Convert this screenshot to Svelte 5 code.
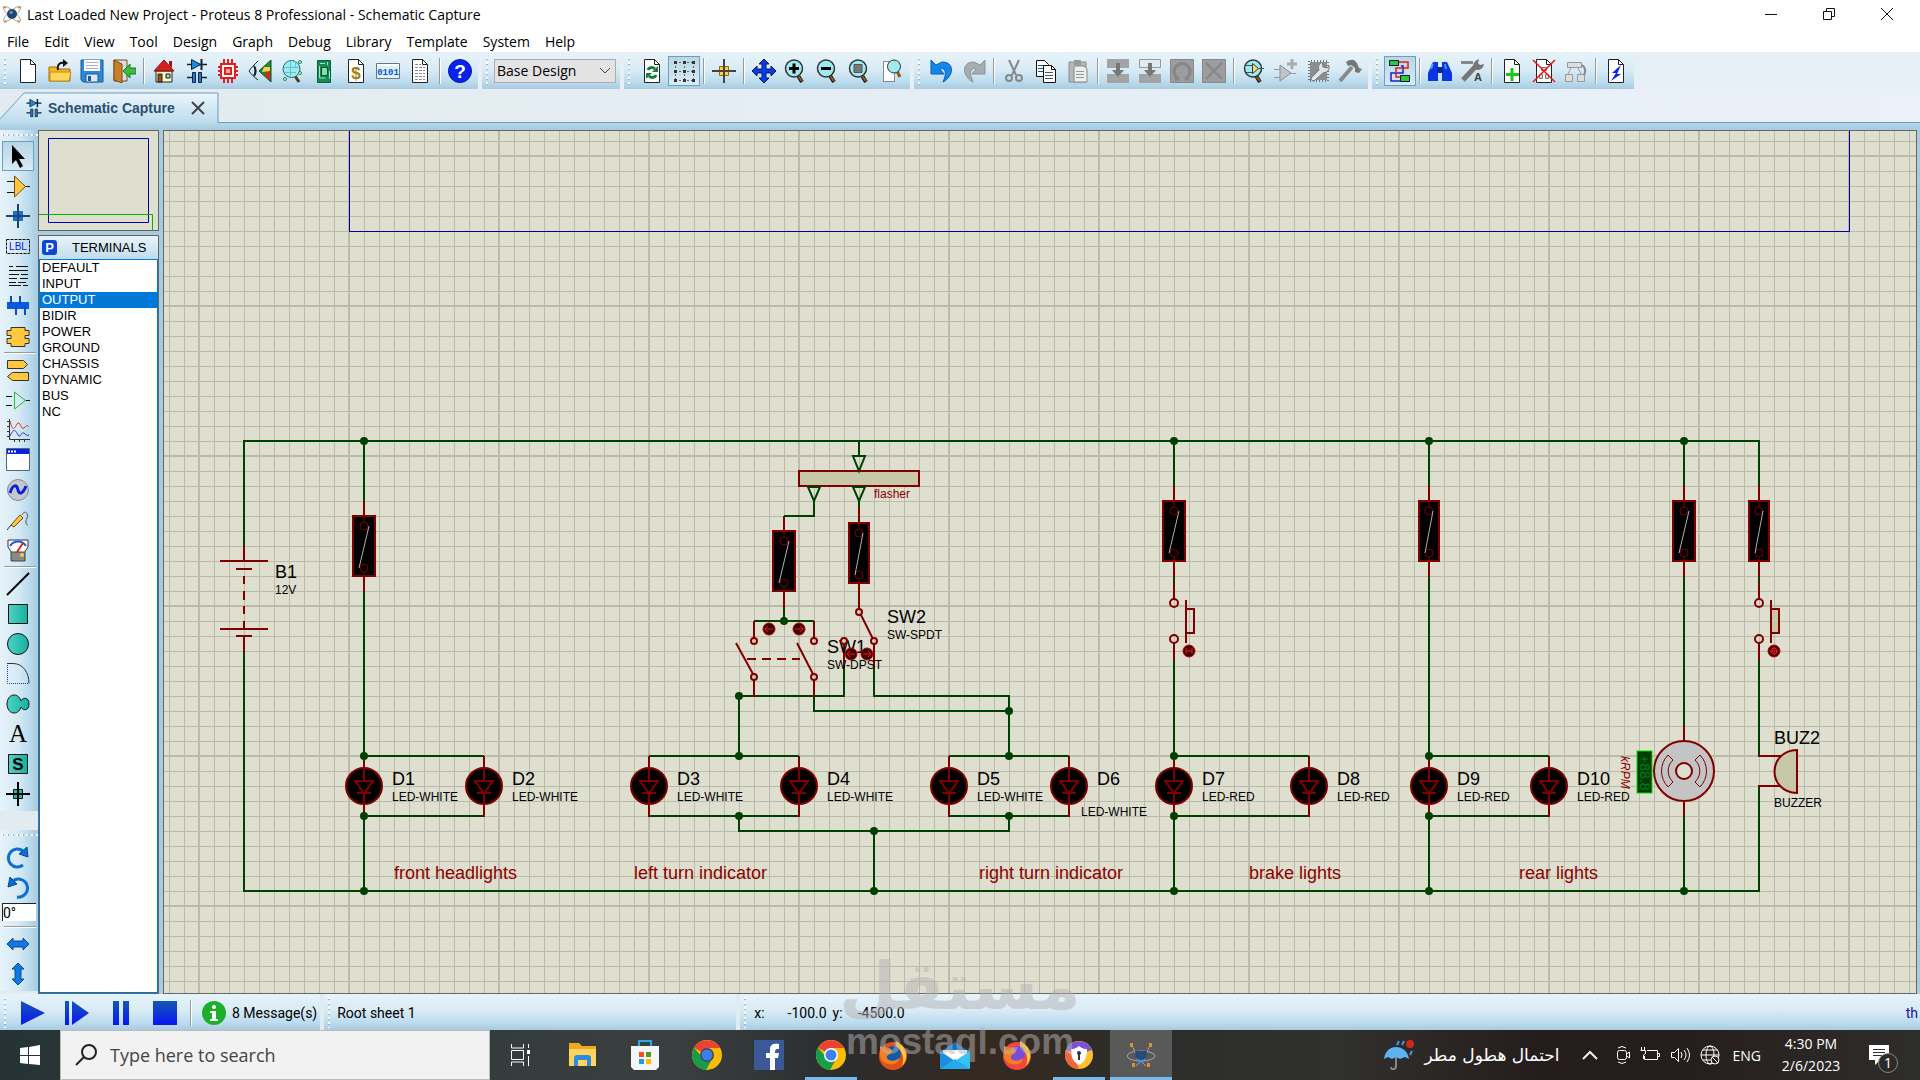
<script lang="ts">
	type Point = [number, number];

	let angle = $state('0°');
	let selected = $state('OUTPUT');
	let query = $state('');

	const menus = ['File', 'Edit', 'View', 'Tool', 'Design', 'Graph', 'Debug', 'Library', 'Template', 'System', 'Help'];
	const terminals = ['DEFAULT', 'INPUT', 'OUTPUT', 'BIDIR', 'POWER', 'GROUND', 'CHASSIS', 'DYNAMIC', 'BUS', 'NC'];

	// '|' is a separator
	const fileBar = ['new', 'open', 'save', 'exit', '|', 'home', 'schematic', 'pcb', 'view3d', 'gerber', 'explorer', 'bom', 'code', 'notes', '|', 'help'];
	const viewBar = ['redraw', 'grid', '|', 'origin', '|', 'pan', 'zoomin', 'zoomout', 'zoomall', 'zoomarea'];
	const editBar = ['undo', 'redo', '|', 'cut', 'copy', 'paste', '|', 'blockcopy', 'blockmove', 'blockrotate', 'blockdelete', '|', 'pick', 'make', 'package', 'decompose'];
	const designBar = ['autoroute', '|', 'find', 'assign', '|', 'addsheet', 'delsheet', 'exitsheet', '|', 'erc'];
	const modeBar = [
		'select', 'component', 'junction', 'label', 'script', 'bus', 'subcircuit', '|',
		'terminal', 'pin', 'graph', 'popup', 'generator', 'probe', 'meter', '|',
		'line', 'box', 'circle', 'arc', 'path', 'text', 'symbol', 'marker'
	];
	const pressed = ['grid', 'autoroute', 'select'];

	const page = '<path d="M4.500 .5h10l5 5v18h-15z" fill="#fff" stroke="#222"/><path d="M14.500 .5v5h5" fill="none" stroke="#222"/>';
	const handle = '<path d="m13 15 5 8" stroke="#222" stroke-width="4"/><path d="m14 17 4 5" stroke="#9a5a1c" stroke-width="2"/>';
	const lens = handle + '<circle cx="10" cy="9.500" r="8.500" fill="#9fe9ef" stroke="#333" stroke-width="1.500"/>';
	const diodeCap =
		'<path d="M3 5.500h20M3 18.500h5M18 18.500h5" stroke="#123" stroke-width="1.500"/><path d="M7.500 .5v10l9-5z" fill="#1a8ae0" stroke="#123"/><path d="M17.500 0v11" stroke="#123" stroke-width="2"/><path d="M8.500 13.500h3v10h-3zM14.500 13.500h3v10h-3z" fill="#1a7fe0" stroke="#123"/>';
	const chrome =
		'<circle cx="15" cy="15" r="15" fill="#fbbc05"/><path d="M15 15 2 7.500A15 15 0 0 1 28 8H15z" fill="#ea4335"/><path d="M2 7.500A15 15 0 0 0 14 30l5-9-4-6-6 1z" fill="#169c4b"/><circle cx="15" cy="15" r="7" fill="#fff"/><circle cx="15" cy="15" r="5.500" fill="#3d7fee"/>';

	const icons: Record<string, string> = {
		new: page,
		open: '<path d="M1 8h7l2 2h12v12H1z" fill="#f4b71f" stroke="#9c6b0c"/><path d="M2 13h21l-2 9H2z" fill="#ffd659" stroke="#c48b15"/><path d="M10 11c-1-6 2-8 7-7" fill="none" stroke="#111" stroke-width="2"/><path d="m15 0 5 4-5 4z" fill="#111"/>',
		save: '<path d="M1 1h22v22H3l-2-2z" fill="#2d86d9" stroke="#1a5a9e"/><path d="M4 1h16v11H4z" fill="#fff"/><path d="M6 3.500h12M6 6.500h12M6 9.500h12" stroke="#aac"/><path d="M6 15h12v8H6z" fill="#dfe8ef" stroke="#1a5a9e"/><path d="M8 17h3v5H8z" fill="#1a5a9e"/>',
		exit: '<path d="M2 1h13v21H2z" fill="#d8dde0" stroke="#7a4a10"/><path d="m2 1 8 4v19l-8-3z" fill="#c98028" stroke="#7a4a10"/><path d="M24 9h-6V5l-7 7 7 7v-4h6z" fill="#3dbb3d" stroke="#1d7a25"/>',
		home: '<path d="M4 12h16v11H4z" fill="#fff5b8" stroke="#222"/><path d="M2 12 12 1l10 11z" fill="#d62020" stroke="#801010"/><path d="M17 2h3v7l-3-3z" fill="#b01010"/><path d="M6 15h4v8H6z" fill="#8a5a22" stroke="#222"/><path d="M14 15h4v4h-4z" fill="#8fd0f5" stroke="#222"/>',
		schematic: diodeCap,
		pcb: '<path d="M8 0v24M12 0v24M16 0v24M2 8h20M2 12h20M2 16h20" stroke="#e02020" stroke-width="2"/><path d="M5 5h14v14H5z" fill="#fff" stroke="#e02020" stroke-width="2"/><path d="M8 8h8v8H8z" fill="#e02020"/><path d="M10 10h4v4h-4z" fill="#f5a0a0"/>',
		view3d: '<path d="M10 2C6 6 3 9 1 12c2 3 5 6 9 9" fill="none" stroke="#222"/><path d="M6 7c2 3 2 7 0 10" fill="#58b" stroke="#123" stroke-width="2"/><path d="M23 1v22L11 12z" fill="#1d8a3a" stroke="#0b4d1c"/><path d="M22 12v9l-6-6z" fill="#e02020"/><path d="M16 8h6v4l-8 1z" fill="#ffd23c"/>',
		gerber: '<path d="m15 17 4 6" stroke="#5a3a14" stroke-width="3"/><circle cx="11.500" cy="10" r="8.500" fill="#9fe9ef" stroke="#2a6a78"/><path d="M4 8.500h15M10.500 2v16M15.500 2v6M4 13.500h12" stroke="#5cc4cc"/><g fill="#cfe" stroke="#168a4a"><circle cx="20" cy="3" r="1.500"/><circle cx="20" cy="14" r="1.500"/><circle cx="5" cy="20" r="1.500"/></g>',
		explorer: '<path d="M5.500 1.500h13v22h-13z" fill="#168a55" stroke="#0d5c38"/><path d="M9.500 8.500h6v8h-6z" fill="#7fe0b0" stroke="#0a4a2c"/><path d="M8 4.500h5M15.500 3v3M7.500 7v12h6M17.500 12v8" stroke="#8ff0c0" fill="none"/>',
		bom: page + '<text x="12" y="20" text-anchor="middle" font-family="Liberation Sans" font-weight="700" font-size="17" fill="#a07f0e">$</text>',
		code: '<path d="M.5 4.500h23v15H.5z" fill="#d8f6fa" stroke="#678"/><path d="M1 5h22v2H1z" fill="#fff"/><text x="12" y="16" text-anchor="middle" font-family="Liberation Mono" font-weight="700" font-size="9" fill="#1550d0">0101</text>',
		notes: page + '<path d="M7 5.500h6M7 8.500h10M7 11.500h10M7 14.500h10M7 17.500h10M7 20.500h10" stroke="#889" stroke-dasharray="3 1"/>',
		help: '<circle cx="12" cy="12" r="11.500" fill="#0a22f0" stroke="#0618a0"/><text x="12" y="19" text-anchor="middle" font-family="Liberation Sans" font-weight="700" font-size="19" fill="#fff">?</text>',
		redraw: page + '<path d="M8 11c1-3 5-3 7-1" fill="none" stroke="#15803a" stroke-width="3"/><path d="M18 7v6h-6z" fill="#15803a"/><path d="M16 16c-1 3-5 3-7 1" fill="none" stroke="#15803a" stroke-width="3"/><path d="M6 20v-6h6z" fill="#15803a"/>',
		grid: '<path d="M3 3.500h19M3 12.500h19M3 21.500h19M3.500 3v18M12.500 3v18M21.500 3v18" fill="none" stroke="#666" stroke-dasharray="2 2"/><path d="M2 3.500h3M11 3.500h3M20 3.500h3M2 12.500h3M11 12.500h3M20 12.500h3M2 21.500h3M11 21.500h3M20 21.500h3" stroke="#333" stroke-width="3"/>',
		origin: '<path d="M7.500 7.500h9v9h-9z" fill="#ffd23c" stroke="#8a6a10"/><path d="M12 0v24M0 12h24" stroke="#444" stroke-width="2"/>',
		pan: '<path d="m12 0 5 5h-3v5h5V7l5 5-5 5v-3h-5v5h3l-5 5-5-5h3v-5H5v3l-5-5 5-5v3h5V5H7z" fill="#0a3af0" stroke="#0a1a50"/>',
		zoomin: lens + '<path d="M5 9.500h10M10 4.500v10" stroke="#000" stroke-width="3"/>',
		zoomout: lens + '<path d="M5 9.500h10" stroke="#000" stroke-width="3"/>',
		zoomall: lens + '<path d="M6 5.500h8v8H6z" fill="#777" stroke="#555"/>',
		zoomarea: '<path d="M3.500 2.500h11v20h-11z" fill="#fff" stroke="#222" stroke-dasharray="1 1"/><path d="m17 12 3 6" stroke="#8a5a22" stroke-width="3"/><circle cx="14" cy="7.500" r="6.500" fill="#9fe9ef" stroke="#333"/>',
		undo: '<path d="M1 1v14h13l-4-5c4-2 8 2 3 13C24 17 25 3 12 3L6 6z" fill="#1486e8" stroke="#0a5ab8"/>',
		redo: '<path d="M23 1v14H10l4-5c-4-2-8 2-3 13C0 17-1 3 12 3l6 3z" fill="#a5adb2" stroke="#8a9298"/>',
		cut: '<path d="m7 1 7 15M17 1l-7 15" stroke="#888" stroke-width="2"/><g fill="none" stroke="#888" stroke-width="2"><circle cx="7" cy="19" r="3"/><circle cx="17" cy="19" r="3"/></g>',
		copy: '<path d="M2.500 1.500h8l4 4v12h-12z" fill="#fff" stroke="#111"/><path d="M4 6.500h6M4 9.500h6M4 12.500h6" stroke="#258"/><path d="M9.500 6.500h8l4 4v13h-12z" fill="#fff" stroke="#111"/><path d="M17.500 6.500v4h4" stroke="#111"/><path d="M11 13.500h8M11 16.500h8M11 19.500h8" stroke="#456"/>',
		paste: '<path d="M3 3h17v20H3z" fill="#b4b8ba" stroke="#8a8e90"/><path d="M8 1h7v5H8z" fill="#999"/><path d="M8 7h10l3 3v13H8z" fill="#eee" stroke="#888"/><path d="M10 12.500h8M10 15.500h8M10 18.500h8" stroke="#999"/>',
		blockcopy: '<path d="M1 0h22v9H1zM1 15h22v9H1z" fill="#a2a5a6"/><path d="M10 4h4v7h4l-6 7-6-7h4z" fill="#777"/>',
		blockmove: '<path d="M1.500 .5h21v8h-21z" fill="#e2eaee" stroke="#999"/><path d="M1 15h22v9H1z" fill="#a2a5a6"/><path d="M10 4h4v7h4l-6 7-6-7h4z" fill="#777"/>',
		blockrotate: '<path d="M.5 .5h23v23H.5z" fill="#9b9d9e" stroke="#888"/><path d="M5 20h4a8 8 0 1 1 6 0h4" fill="none" stroke="#858788" stroke-width="3"/>',
		blockdelete: '<path d="M.5 .5h23v23H.5z" fill="#9b9d9e" stroke="#888"/><path d="m4 4 16 16M20 4 4 20" stroke="#858788" stroke-width="2"/>',
		pick: handle + '<circle cx="11" cy="9.500" r="8.500" fill="#9fe9ef" stroke="#333" stroke-width="1.500"/><path d="M4 6.500h6M4 13.500h6M16 9.500h6" stroke="#357"/><path d="m10.500 4.500 6 5-6 5z" fill="#ffe04a" stroke="#335"/>',
		make: '<path d="M0 10.500h6M0 18.500h6M14 14.500h8" stroke="#999"/><path d="m6 6 11 8-11 8z" fill="#bfc5c8" stroke="#8a8f92"/><path d="M18 0v10M13 5h10" stroke="#aaa" stroke-width="3"/>',
		package: '<path d="M4 3h17v18H4z" fill="#8b8d8e"/><path d="M3 2v20h19V2z" fill="none" stroke="#777" stroke-width="2" stroke-dasharray="1 2"/><path d="M5 19 13 11q-2-5 3-8l1 5 4 1 2-2q1 6-6 7L8 22q-3 0-3-3z" fill="#e2e5e7" stroke="#777"/>',
		decompose: '<path d="m2 22 12-14" stroke="#8a8a8a" stroke-width="4"/><path d="M8 3q4-3 8-2l3 3 2 5 3 1-3 4-4-1v-4l-4-3-3 1z" fill="#777"/>',
		autoroute: '<path d="M13 7h2v7H3v8h9" fill="none" stroke="#1020e0" stroke-width="1.500"/><path d="M10 3h10v6H8v9h4" fill="none" stroke="#e02010" stroke-width="1.500"/><path d="M1.500 1.500h9v5h-9zM12.500 16.500h9v6h-9z" fill="#25d030" stroke="#114"/>',
		find: '<path d="M5 3h5v19H0v-8zM14 3h5l5 11v8H14z" fill="#0a35e0"/><path d="M9 8h6v6H9z" fill="#062a9c"/><path d="M3 10 5 5M18 10l-1-5" stroke="#3d9af5" stroke-width="2"/>',
		assign: '<path d="m3 21 13-14" stroke="#777" stroke-width="5"/><path d="M13 8q0-6 6-8l-1 4 2 2 4-1q-1 6-7 6z" fill="#777"/><path d="M1 3.500h12" stroke="#888" stroke-width="3"/><text x="18" y="22" text-anchor="middle" font-family="Liberation Sans" font-weight="700" font-size="11" fill="#444">A</text>',
		addsheet: page + '<path d="M12 9v13M6 15.500h13" stroke="#1cc61c" stroke-width="3"/>',
		delsheet: page + '<path d="M9.500 8.500h5v3h-5zM7.500 15.500h3v4h-3zM13.500 15.500h3v4h-3z" fill="#ddd" stroke="#777"/><path d="m1 1 22 22M23 1 1 23" stroke="#f01010" stroke-width="1.500"/>',
		exitsheet: '<path d="M3.500 3.500h14v5h-14zM1.500 15.500h7v7h-7zM13.500 15.500h7v7h-7zM7 9l-3 6M14 9l3 6" fill="#ddd" stroke="#999"/><path d="M18 6c4 3 4 6 2 10" fill="none" stroke="#888" stroke-width="2"/>',
		erc: page + '<path d="m17 6-9 8h4l-5 8 10-7h-4z" fill="#0a22f0"/>',
		select: '<path d="M6 1v19l4-4 4 8 3-2-4-7h6z" fill="#000"/>',
		component: '<path d="M1 7.500h7M1 18.500h7M19 12.500h5" stroke="#111"/><path d="M8.500 2v21l11-10.500z" fill="#ffc83c" stroke="#7a4a10"/>',
		junction: '<path d="M7 7h10v10H7z" fill="#1a6fd8"/><path d="M12 0v24M0 12h24" stroke="#246" stroke-width="2"/>',
		label: '<path d="M.5 5.500h23v14H.5z" fill="none" stroke="#111" stroke-dasharray="3 1"/><text x="12" y="16" text-anchor="middle" font-family="Liberation Sans" font-size="10" fill="#0a22e0">LBL</text>',
		script: '<path d="M3 2.500h4M10 2.500h12M3 6.500h19M3 10.500h10M15 10.500h7M3 14.500h8M14 14.500h8M3 18.500h7M12 18.500h8M3 21.500h12M17 21.500h5" stroke="#111"/>',
		bus: '<path d="M1 8h22v7H1z" fill="#0a5ae0"/><path d="M5 2v8M14 2v8M10 12v9M19 12v9" stroke="#0a4ac8" stroke-width="2"/>',
		subcircuit: '<path d="M5 3.500h14v3h4v5h-4v3h4v5h-4v3H5v-3H1v-5h4v-3H1v-5h4z" fill="#ffc83c" stroke="#333"/>',
		terminal: '<path d="M1.500 2.500h16l4 4-4 4h-16zM22.500 14.500h-16l-5 4 5 4h16z" fill="#ffc83c" stroke="#333"/>',
		pin: '<path d="M0 8.500h6M0 17.500h6M19 12.500h5" stroke="#111"/><path d="M8.500 4v17l11-8.500z" fill="none" stroke="#1cc61c"/>',
		graph: '<path d="M3.500 1v20.500H24M1 3.500h2M1 8.500h2M1 13.500h2M1 18.500h2M8.500 22v2M13.500 22v2M18.500 22v2" fill="none" stroke="#333"/><path d="M4 3c3 11 4 8 7 3s4 7 7 4 3-3 5-1" fill="none" stroke="#e03020"/><path d="M4 18c4-9 6-5 8-1s4-4 6-2 3 3 5 2" fill="none" stroke="#1030e0"/>',
		popup: '<path d="M.5 .5h23v22H.5z" fill="#fff" stroke="#567"/><path d="M1 1h22v5H1z" fill="#0a22e0"/><path d="M2 3.500h9" stroke="#fff" stroke-width="2" stroke-dasharray="2 1"/>',
		generator: '<circle cx="12" cy="12" r="10.500" fill="#c3c9cc" stroke="#889"/><path d="M4 15c3-10 7-8 8-3s5 4 8-4" fill="none" stroke="#0a22e0" stroke-width="3"/>',
		probe: '<path d="m1 22 4-5" stroke="#333"/><path d="m5 17 9-10 3 3-9 9z" fill="#ffc83c" stroke="#6a4a10"/><path d="M16 7c3-6 7-1 5 3s-1 7 1 7" fill="none" stroke="#555"/>',
		meter: '<path d="M2 2h20v7l-4 6H6L2 9z" fill="#fff" stroke="#333"/><path d="M4 8c4-6 12-6 16 0" fill="none" stroke="#1a5ae0" stroke-width="2"/><path d="m11 14 6-9" stroke="#e02020" stroke-width="2"/><path d="M5 14h14v9H5z" fill="#888" stroke="#444"/><circle cx="16" cy="17" r="2" fill="#ffc83c"/>',
		line: '<path d="M1 23 23 1" stroke="#000" stroke-width="2"/>',
		box: '<path d="M2.500 2.500h19v19h-19z" fill="url(#teal)" stroke="#111"/>',
		circle: '<circle cx="12" cy="12" r="10.500" fill="url(#teal)" stroke="#111"/>',
		arc: '<path d="M1 1.500h6c10 0 16 9 16 20" fill="none" stroke="#333"/><path d="M1.500 1v20.500H23" fill="none" stroke="#2233c8" stroke-dasharray="1 1"/>',
		path: '<path d="M8 3c4 0 6 3 7 6 1-3 8-5 8 3s-7 6-8 3c-1 3-3 6-7 6s-7-4-7-9 3-9 7-9z" fill="url(#teal)" stroke="#111"/>',
		text: '<text x="12" y="20" text-anchor="middle" font-family="Liberation Serif" font-size="25" fill="#000">A</text>',
		symbol: '<path d="M2.500 2.500h19v19h-19z" fill="url(#teal)" stroke="#111"/><text x="12" y="18" text-anchor="middle" font-family="Liberation Sans" font-weight="700" font-size="17" fill="#000">S</text>',
		marker: '<path d="M7.500 7.500h9v9h-9z" fill="#1fb9a5" stroke="#111"/><path d="M12 0v24M0 12h24" stroke="#000" stroke-width="2"/>',
		rotatecw: '<path d="M17 5A9 9 0 1 0 17 19" fill="none" stroke="#0d6fd0" stroke-width="3"/><path d="m13 8 8-7 1 10z" fill="#0d6fd0" stroke="#0a4a90"/>',
		rotateccw: '<path d="M7 5a9 9 0 1 1 4 16" fill="none" stroke="#0d6fd0" stroke-width="3"/><path d="M11 8 4 1 2 11z" fill="#0d6fd0" stroke="#0a4a90"/>',
		mirrorx: '<path d="m1 12 6-6v3h10V6l6 6-6 6v-3H7v3z" fill="#1278e0" stroke="#0a4a90"/>',
		mirrory: '<path d="m12 1 6 6h-3v10h3l-6 6-6-6h3V7H6z" fill="#1278e0" stroke="#0a4a90"/>',
		play: '<path d="M0 0v24l24-12z" fill="url(#sim)"/>',
		step: '<path d="M0 0h4v24H0zM7 0v24l17-12z" fill="url(#sim)"/>',
		pause: '<path d="M4 0h6v24H4zM14 0h6v24h-6z" fill="url(#sim)"/>',
		stop: '<path d="M0 0h24v24H0z" fill="url(#sim)"/>'
	};

	const logo =
		'<g fill="none" stroke="#999"><ellipse cx="12" cy="12" rx="13" ry="4" transform="rotate(40 12 12)"/><ellipse cx="12" cy="12" rx="13" ry="4" transform="rotate(-40 12 12)"/></g><circle cx="12" cy="12" r="6" fill="#23466f"/><circle cx="11" cy="10" r="2" fill="#6c93c4"/><g fill="#d98a2b"><circle cx="3" cy="4" r="1.500"/><circle cx="21" cy="4" r="1.500"/><circle cx="4" cy="21" r="1.500"/><circle cx="20" cy="21" r="1.500"/></g>';

	const orbit =
		'<g fill="none" stroke="#a8a8a8"><ellipse cx="15" cy="16" rx="14" ry="5"/><path d="M6 5c2 6 8 16 14 21M24 5c-2 6-8 16-14 21"/></g><path d="M9 11h12l-1 8-5 3-5-3z" fill="#2a4a78"/><path d="M10 18q5 4 10 0l-1 3q-4 3-8 0z" fill="#4f8fd8"/><g fill="#e0902c"><path d="M4 3h3v4H4zM23 3h3v4h-3zM6 23h3v4H6zM21 23h3v4h-3z"/></g>';

	const firefox = (core: string, body: string) =>
		`<circle cx="15" cy="16" r="14" fill="${body}"/><path d="M18 1c10 5 14 16 6 25 3-10 0-15-6-18z" fill="#ffc93a"/><circle cx="15" cy="14" r="8" fill="${core}"/><path d="M2 6c4 2 6 1 9 2 3 2 4 3 2 5s-5 2-4 5 8 4 12 0c0 9-18 9-19-3z" fill="#f4801f"/>`;

	const tasks = [
		{ name: 'Task View', art: '<g fill="none" stroke="#fff" stroke-width="1"><path d="M5.500 4v4h12V4M5.500 10.500h12v9h-12zM5.500 26v-4h12v4M22.500 4v4M22.500 16v10"/><path d="M22.500 10v4" stroke-width="3"/></g>' },
		{ name: 'File Explorer', art: '<path d="M1 3h10l3 3h14v20H1z" fill="#f0a91f"/><path d="M1 9h27v17H1z" fill="#ffd45e"/><path d="M6 26v-8c0-2 1-3 3-3h11c2 0 3 1 3 3v8h-4v-6h-9v6z" fill="#2f8be0"/>' },
		{ name: 'Microsoft Store', art: '<path d="M9 8V1h12v7" fill="none" stroke="#2aa9e8" stroke-width="2"/><path d="M1 6h28v21l-3 3H4l-3-3z" fill="#f5f5f5"/><path d="M9 12h5v5H9z" fill="#f25022"/><path d="M16 12h5v5h-5z" fill="#4a9c22"/><path d="M9 19h5v5H9z" fill="#1a9fe0"/><path d="M16 19h5v5h-5z" fill="#ffb900"/>' },
		{ name: 'Chrome Canary', art: chrome.replace('r="7" fill="#fff"', 'r="7" fill="#3f4a50"') },
		{ name: 'Facebook', art: '<path d="M0 0h30v30H0z" fill="#3b5998"/><path d="M16 30V18h-4v-5h4V9c0-4 3-6 9-5v5c-3 0-4 0-4 4h4l-1 5h-3v12z" fill="#fff"/>' },
		{ name: 'Google Chrome', art: chrome, open: true },
		{ name: 'Firefox', art: firefox('#1259a8', '#e0501c') },
		{ name: 'Mail', art: '<path d="M0 12 15 2l15 10v17H0z" fill="#0f6fc5"/><path d="M3 10h24v12H3z" fill="#fff"/><path d="M0 11l15 10L0 29z" fill="#1a8fe0"/><path d="m30 11-15 10 15 8z" fill="#35c3f5"/><path d="m0 29 15-10 15 10z" fill="#26a9ef"/>' },
		{ name: 'Firefox Browser', art: firefox('#7a4bd8', '#f0483e') },
		{ name: 'Secure Browser', art: '<circle cx="15" cy="15" r="14" fill="#ffc02e"/><path d="M2 10A14 14 0 0 1 28 10l-13 4z" fill="#7b52d8"/><path d="M2 10a14 14 0 0 0 13 19l-5-13z" fill="#f2643c"/><path d="M7 9c5 0 6-2 8-3 2 1 3 3 8 3 0 8-2 13-8 16-6-3-8-8-8-16z" fill="#fff"/><circle cx="15" cy="13" r="2" fill="#333"/><path d="M14 14h2v6h-2z" fill="#333"/>', open: true },
		{ name: 'Proteus', art: orbit, open: true, active: true }
	];

	// schematic, in sheet pixels
	const wires = [
		'M244 546V441H1759V486', 'M244 652V891H1759V786', 'M364 441V501', 'M364 592V756', 'M859 441V456',
		'M814 501V516H784', 'M859 501V517', 'M784 607V621', 'M754 621H814', 'M739 756V696H844V666',
		'M814 696V711H1009', 'M874 666V696H1009V756', 'M1174 441V486', 'M1174 577V583', 'M1174 660V756',
		'M1429 441V486', 'M1429 577V756', 'M1684 441V486', 'M1684 577V726', 'M1684 817V891',
		'M1759 577V583', 'M1759 660V757', 'M364 756H484M364 816H484', 'M649 756H799M649 816H799',
		'M949 756H1069M949 816H1069', 'M1174 756H1309M1174 816H1309', 'M1429 756H1549M1429 816H1549',
		'M739 816V831H1009V816', 'M874 831V891', 'M364 816V891', 'M1174 816V891', 'M1429 816V891'
	];

	const nodes: Point[] = [
		[364, 441], [1174, 441], [1429, 441], [1684, 441], [784, 621], [739, 696], [1009, 711],
		[364, 756], [739, 756], [1009, 756], [1174, 756], [1429, 756],
		[364, 816], [739, 816], [1009, 816], [1174, 816], [1429, 816],
		[874, 831], [364, 891], [874, 891], [1174, 891], [1429, 891], [1684, 891]
	];

	const fuses = [
		{ x: 364, y: 516, half: 11 },
		{ x: 784, y: 531, half: 11 },
		{ x: 859, y: 523, half: 10 },
		{ x: 1174, y: 501, half: 11 },
		{ x: 1429, y: 501, half: 10 },
		{ x: 1684, y: 501, half: 11 },
		{ x: 1759, y: 501, half: 10 }
	];

	const leds = [
		{ name: 'D1', x: 364, type: 'LED-WHITE' },
		{ name: 'D2', x: 484, type: 'LED-WHITE' },
		{ name: 'D3', x: 649, type: 'LED-WHITE' },
		{ name: 'D4', x: 799, type: 'LED-WHITE' },
		{ name: 'D5', x: 949, type: 'LED-WHITE' },
		{ name: 'D6', x: 1069, type: 'LED-WHITE', tx: 12, ty: 816 },
		{ name: 'D7', x: 1174, type: 'LED-RED' },
		{ name: 'D8', x: 1309, type: 'LED-RED' },
		{ name: 'D9', x: 1429, type: 'LED-RED' },
		{ name: 'D10', x: 1549, type: 'LED-RED' }
	];

	const contacts: Point[] = [[754, 641], [814, 641], [754, 677], [814, 677], [859, 612], [844, 641], [874, 641]];

	const actuators = [
		{ x: 769, y: 629, d: 'M4 0H-4M-1-3-4 0l3 3' },
		{ x: 799, y: 629, d: 'M-4 0H4M1-3 4 0 1 3' },
		{ x: 851, y: 654, d: 'M4 0H-4M-1-3-4 0l3 3' },
		{ x: 867, y: 654, d: 'M-4 0H4M1-3 4 0 1 3' },
		{ x: 1189, y: 651, d: 'M-3-3V3M3-3V3M-3 0H3' },
		{ x: 1774, y: 651, d: 'M-4 0H4M0-4V4M-3 0a3 3 0 1 0 6 0a3 3 0 1 0-6 0' }
	];

	const captions = [
		{ x: 394, text: 'front headlights' },
		{ x: 634, text: 'left turn indicator' },
		{ x: 979, text: 'right turn indicator' },
		{ x: 1249, text: 'brake lights' },
		{ x: 1519, text: 'rear lights' }
	];
</script>

{#snippet glyph(name: string)}
	<svg width="24" height="24" viewBox="0 0 24 24" fill="none" aria-hidden="true">{@html icons[name]}</svg>
{/snippet}

{#snippet tools(names: string[])}
	{#each names as name}
		{#if name === '|'}
			<span class="sep"></span>
		{:else}
			<button class="tool" class:pressed={pressed.includes(name)} aria-label={name}>{@render glyph(name)}</button>
		{/if}
	{/each}
{/snippet}

<svg class="defs" width="0" height="0" aria-hidden="true">
	<defs>
		<linearGradient id="teal"><stop offset="0" stop-color="#52d0c8" /><stop offset="1" stop-color="#12b39c" /></linearGradient>
		<linearGradient id="sim" x2="0" y2="1"><stop offset="0" stop-color="#1259b0" /><stop offset="1" stop-color="#0a14f5" /></linearGradient>
	</defs>
</svg>

<div class="window">
	<header class="titlebar">
		<svg width="20" height="20" viewBox="0 0 24 24" aria-hidden="true">{@html logo}</svg>
		<h1>Last Loaded New Project - Proteus 8 Professional - Schematic Capture</h1>
		<button class="caption-btn" aria-label="Minimize">
			<svg width="12" height="12" fill="none" stroke="#111"><path d="M0 6.500h12" /></svg>
		</button>
		<button class="caption-btn" aria-label="Restore">
			<svg width="12" height="12" fill="none" stroke="#111"><path d="M.5 3.500h8v8h-8zM3.500 3V.5h8v8H9" /></svg>
		</button>
		<button class="caption-btn" aria-label="Close">
			<svg width="12" height="12" fill="none" stroke="#111"><path d="m0 0 12 12M12 0 0 12" /></svg>
		</button>
	</header>

	<nav class="menubar">
		{#each menus as menu}
			<button>{menu}</button>
		{/each}
	</nav>

	<div class="toolbars">
		<div class="bar">{@render tools(fileBar)}</div>
		<div class="bar variant">
			<select aria-label="Design variant">
				<option>Base Design</option>
			</select>
			<svg class="caret" width="10" height="6" fill="none" stroke="#444"><path d="m0 0 5 5 5-5" /></svg>
		</div>
		<div class="bar">{@render tools(viewBar)}</div>
		<div class="bar">{@render tools(editBar)}</div>
		<div class="bar">{@render tools(designBar)}</div>
	</div>

	<div class="tabs">
		<div class="tab">
			<svg class="tab-shape" width="219" height="31" aria-hidden="true">
				<path d="M0 27 24 1h194v30H0z" fill="url(#tabfill)" />
				<path d="M0 27 24 1h194v30" fill="none" stroke="#6a9fbd" stroke-width="1" />
				<defs>
					<linearGradient id="tabfill" x2="0" y2="1"><stop offset="0" stop-color="#ebf5fb" /><stop offset="1" stop-color="#bddcec" /></linearGradient>
				</defs>
			</svg>
			<svg width="18" height="20" viewBox="1 0 24 24" aria-hidden="true">{@html diodeCap}</svg>
			<span>Schematic Capture</span>
			<button aria-label="Close tab">
				<svg width="14" height="14" stroke="#444" stroke-width="2"><path d="m1 1 12 12M13 1 1 13" /></svg>
			</button>
		</div>
	</div>

	<main>
		<aside class="modes">
			<div class="vbar">{@render tools(modeBar)}</div>
			<div class="vbar orient">
				{@render tools(['rotatecw', 'rotateccw'])}
				<input type="text" aria-label="Rotation angle" bind:value={angle} />
				{@render tools(['|', 'mirrorx', 'mirrory'])}
			</div>
		</aside>

		<section class="side">
			<div class="overview">
				<svg width="119" height="99" fill="none">
					<path d="M9.500 7.500h100v84H9.500z" stroke="#0000b4" />
					<path d="M0 83.500h113.500V99" stroke="#00b400" />
				</svg>
			</div>
			<div class="objects">
				<div class="objects-head">
					<button aria-label="Pick from libraries">P</button>
					<span>TERMINALS</span>
				</div>
				<ul>
					{#each terminals as terminal}
						<li>
							<button class:selected={terminal === selected} onclick={() => (selected = terminal)}>{terminal}</button>
						</li>
					{/each}
				</ul>
			</div>
		</section>

		<section class="canvas">
			<svg width="100%" height="100%">
				<defs>
					<pattern id="grid" x="348" y="455" width="150" height="150" patternUnits="userSpaceOnUse">
						<rect width="150" height="150" fill="#dfdfcf" />
						{#each [1, 2, 3, 4, 5, 6, 7, 8, 9] as i}
							<rect x={i * 15 + 1} width="1" height="150" fill="#bbbbab" />
							<rect y={i * 15 + 1} width="150" height="1" fill="#bbbbab" />
						{/each}
						<rect width="2" height="150" fill="#bbbbab" />
						<rect width="150" height="2" fill="#bbbbab" />
					</pattern>
				</defs>

				<g transform="translate(-164 -131)">
					<rect x="164" y="131" width="100%" height="100%" fill="url(#grid)" />
					<path d="M349 131V231H1849V131" fill="none" stroke="#0000a0" stroke-width="1" shape-rendering="crispEdges" />

					{#each wires as d}
						<path class="wire" {d} />
					{/each}

					<!-- battery -->
					<path class="part" d="M244 546V561M220 561H268M236 569H252M244 576V584M244 591V600M244 606V614M244 621V629M220 629H268M236 636H252M244 636V652" />

					<!-- flasher -->
					<rect class="part" x="799" y="471" width="120" height="15" style:fill="#c8c8a8" />
					<path class="wire" d="M853 456H865L859 471ZM808 487H820L814 501ZM853 487H865L859 501Z" />

					{#each fuses as { x, y, half }}
						<path class="part" d="M{x} {y - 15}V{y}M{x} {y + 60}V{y + 76}" />
						<rect class="part" x={x - half} {y} width={half * 2} height="60" style:fill="#000" />
						<g fill="none" stroke="#800000">
							<circle cx={x} cy={y + 10} r="4" />
							<circle cx={x} cy={y + 52} r="4" />
							<path d="M{x} {y}v6M{x} {y + 56}v5" />
						</g>
						<path d="M{x + half - 6} {y + 10}L{x - half + 6} {y + 52}" stroke="#b0b0b0" />
					{/each}

					<path class="part" d="M859 584V609M754 621V638M814 621V638M754 680V697M814 680V697M844 644V667M874 644V667" />
					<path class="part" d="M753 674 736 643M813 674 797 643M861 615 873 639" />
					<path class="part" d="M747 659H800" stroke-dasharray="9 6" />
					<text class="ref" x="827" y="653">SW1</text>
					<text class="val" x="827" y="669">SW-DPST</text>
					<text class="ref" x="887" y="623">SW2</text>
					<text class="val" x="887" y="639">SW-SPDT</text>
					{#each contacts as [cx, cy]}
						<circle class="part" {cx} {cy} r="3" />
					{/each}

					{#each [1174, 1759] as x}
						<path class="part" d="M{x} 583V599M{x} 643V660M{x + 12} 600V643" />
						<rect class="part" x={x + 12} y="609" width="8" height="24" style:fill={x === 1759 ? '#c8c8a8' : 'none'} />
						<circle class="part" cx={x} cy="603" r="4" />
						<circle class="part" cx={x} cy="639" r="4" />
					{/each}

					{#each actuators as { x, y, d }}
						<g transform="translate({x} {y})">
							<circle r="6" fill="#380000" stroke="#c00000" />
							<path {d} fill="none" stroke="#ff1414" />
						</g>
					{/each}

					{#each leds as led}
						<path class="part" d="M{led.x} 756V770M{led.x} 802V817" />
						<circle class="part" cx={led.x} cy="786" r="18" style:fill="#000" />
						<path class="part" d="M{led.x} 768V781M{led.x - 9} 781h18l-9 12zM{led.x - 7} 793h14M{led.x} 793V804" />
						<text class="ref" x={led.x + 28} y="785">{led.name}</text>
						<text class="val" x={led.x + (led.tx ?? 28)} y={led.ty ?? 801}>{led.type}</text>
					{/each}

					<!-- motor -->
					<path class="part" d="M1684 726V741M1684 801V817" />
					<circle class="part" cx="1684" cy="771" r="30" style:fill="#c4c4c4" />
					<circle class="part" cx="1684" cy="771" r="8" style:fill="#dfdfcf" />
					<path
						d="M1668 755a23 23 0 0 0 0 32l5-5a15 15 0 0 1 0-22zM1700 755a23 23 0 0 1 0 32l-5-5a15 15 0 0 0 0-22z"
						fill="none"
						stroke="#800000"
					/>
					<rect x="1637" y="751" width="15" height="42" fill="#003c00" stroke="#00e000" />
					<text class="rpm" transform="translate(1640 755) rotate(90)">+88.8</text>
					<text class="unit" transform="translate(1621 756) rotate(90)">kRPM</text>

					<!-- buzzer -->
					<path class="part" d="M1758 756H1781M1758 786H1781" />
					<path class="part" d="M1797 750V793C1767 792 1767 751 1797 750Z" style:fill="#c8c8a8" />
					<text class="ref" x="1774" y="744">BUZ2</text>
					<text class="val" x="1774" y="807">BUZZER</text>

					<text class="ref" x="275" y="578">B1</text>
					<text class="val" x="275" y="594">12V</text>
					<text class="val red" x="874" y="498">flasher</text>
					{#each captions as { x, text }}
						<text class="ref red" {x} y="879">{text}</text>
					{/each}

					{#each nodes as [cx, cy]}
						<circle {cx} {cy} r="4" fill="#004000" />
					{/each}
				</g>
			</svg>
		</section>
	</main>

	<footer class="status">
		<div class="bar sim">
			{#each ['play', 'step', 'pause', 'stop'] as name}
				<button class="tool" aria-label={name}>{@render glyph(name)}</button>
			{/each}
			<span class="sep"></span>
			<button class="messages">
				<svg width="24" height="24" aria-hidden="true">
					<circle cx="12" cy="12" r="12" fill="#1fae2b" />
					<circle cx="12" cy="6" r="2" fill="#fff" />
					<path d="M8 10h6v8h2v2H8v-2h2v-6H8z" fill="#fff" />
				</svg>
				8 Message(s)
			</button>
		</div>
		<div class="bar sheet">Root sheet 1</div>
		<div class="bar coords">
			<span>x:</span><span class="num">-100.0</span><span>y:</span><span class="num wide">-4500.0</span>
			<span class="units">th</span>
		</div>
	</footer>

	<div class="taskbar">
		<button class="start" aria-label="Start">
			<svg width="20" height="20" fill="#fff"><path d="M0 3l8-1v8H0zM9 2l11-2v10H9zM0 11h8v8l-8-1zM9 11h11v9L9 19z" /></svg>
		</button>
		<label class="search">
			<svg width="22" height="22" fill="none" stroke="#222" stroke-width="2"><circle cx="14" cy="8" r="7" /><path d="m9 13-8 8" /></svg>
			<input type="text" placeholder="Type here to search" aria-label="Search" bind:value={query} />
		</label>
		{#each tasks as task}
			<button class="task" class:open={task.open} class:active={task.active} aria-label={task.name}>
				<svg width="30" height="30" viewBox="0 0 30 30" aria-hidden="true">{@html task.art}</svg>
			</button>
		{/each}

		<div class="tray">
			<button class="weather" dir="rtl">
				<span>احتمال هطول مطر</span>
				<svg width="30" height="30" fill="none">
					<path d="M12 10v16c0 4-5 4-5 1" stroke="#888" stroke-width="2" />
					<path d="M0 19C1 11 6 7 12 7s12 4 13 12l-4-2-5 2-4-2-4 2-4-2z" fill="#5cb3f2" />
					<path d="m15 1-2 4M20 1l-2 4M28 11l-2 4" stroke="#3d9be8" stroke-width="2" />
					<circle cx="26" cy="4" r="4" fill="#d02818" />
				</svg>
			</button>
			<button class="chevron" aria-label="Show hidden icons">
				<svg width="16" height="10" fill="none" stroke="#eee" stroke-width="2"><path d="m1 9 7-7 7 7" /></svg>
			</button>
			<button aria-label="Meet Now">
				<svg width="14" height="20" fill="none" stroke="#fff"><rect x="1.500" y="5.500" width="9" height="9" rx="2" /><path d="m10.500 9 3-2v6l-3-2M2 3q4-3 8 0M2 17q4 3 8 0" /></svg>
			</button>
			<button aria-label="Battery">
				<svg width="20" height="16" fill="none" stroke="#fff"><path d="M7 3.500h10.500v9h-13V9M17.500 6.500h2v3h-2M1.500 0v3M4.500 0v3M.5 3.500h5v3L3.500 8v4" /></svg>
			</button>
			<button aria-label="Volume">
				<svg width="20" height="18" fill="none" stroke="#fff"><path d="M1.500 6.500h3l4-4v13l-4-4h-3zM11 6q2 3 0 6M14 4q4 5 0 10M17 2q5 7 0 14" /></svg>
			</button>
			<button aria-label="Network">
				<svg width="20" height="20" fill="none" stroke="#fff"><circle cx="10" cy="10" r="9" /><ellipse cx="10" cy="10" rx="4" ry="9" /><path d="M1 10h18M3 5h14M3 15h8" /><circle cx="15" cy="15" r="4" fill="#251e1e" /><path d="m12 12 6 6" /></svg>
			</button>
			<span class="lang">ENG</span>
			<button class="clock"><span>4:30 PM</span><span>2/6/2023</span></button>
			<button class="notify" aria-label="Notifications">
				<svg width="22" height="20"><path d="M0 0h20v15h-9l-5 5v-5H0z" fill="#fff" /><path d="M4 4.500h12M4 7.500h12M4 10.500h12" stroke="#333" /></svg>
				<span class="badge">1</span>
			</button>
		</div>
	</div>

	<div class="watermark">
		<span class="ar">مستقل</span>
		<span class="en">mostaql.com</span>
	</div>
</div>

<style>
	:global(body) {
		margin: 0;
	}

	.window {
		position: relative;
		display: flex;
		flex-direction: column;
		height: 100vh;
		overflow: hidden;
		background: #fff;
		color: #000;
		font-family: 'Open Sans', 'Noto Sans', sans-serif;
		font-size: 14px;
	}

	.defs {
		position: absolute;
	}

	svg {
		display: block;
		flex: none;
	}

	button {
		display: flex;
		align-items: center;
		justify-content: center;
		padding: 0;
		border: 0;
		background: none;
		color: inherit;
		font: inherit;
		white-space: nowrap;
	}

	.titlebar {
		display: flex;
		align-items: center;
		height: 28px;
		padding: 0 4px 0 2px;
	}

	h1 {
		flex: 1;
		margin: 0;
		padding-left: 5px;
		font-size: 14px;
		font-weight: 400;
	}

	.caption-btn {
		width: 58px;
		height: 28px;
	}

	.menubar {
		display: flex;
		gap: 15px;
		height: 24px;
		padding: 2px 7px 0;
		box-sizing: border-box;
	}

	.toolbars {
		display: flex;
		gap: 4px;
		height: 35px;
		padding-top: 2px;
		background: #e6eff6;
	}

	.bar {
		position: relative;
		display: flex;
		align-items: center;
		box-sizing: border-box;
		padding: 0 2px 2px 12px;
		background: linear-gradient(#e6f3fa, #d9ebf5 45%, #bbdcee 80%, #a9cbdd);
	}

	.bar::before {
		content: '';
		position: absolute;
		top: 3px;
		bottom: 2px;
		left: 4px;
		width: 2px;
		background: repeating-linear-gradient(#fff 0 2px, #9cb4c2 2px 3px, transparent 3px 5px);
	}

	.tool {
		box-sizing: border-box;
		width: 32px;
		height: 30px;
	}

	.tool.pressed {
		border: 1px solid #6a9fbd;
		background: linear-gradient(#b9d6e6, #d9ebf5);
	}

	.sep {
		box-sizing: border-box;
		width: 2px;
		height: 26px;
		margin: 0 3px;
		border-left: 1px solid #999;
		background: #fff;
	}

	.variant {
		padding-right: 4px;
	}

	select {
		appearance: none;
		width: 122px;
		height: 24px;
		padding: 0 2px;
		border: 1px solid #adadad;
		border-radius: 0;
		background: #e3e3e3;
		color: #000;
		font: inherit;
	}

	.caret {
		position: absolute;
		right: 10px;
		pointer-events: none;
	}

	.tabs {
		display: flex;
		height: 34px;
		box-sizing: border-box;
		padding-top: 3px;
		border-bottom: 1px solid #6a9fbd;
		background: linear-gradient(90deg, #e2ebf0, #eaf1f9);
	}

	.tab {
		position: relative;
		display: flex;
		align-items: center;
		gap: 5px;
		height: 31px;
		padding-left: 25px;
		color: #2a4f70;
		font-family: 'Liberation Sans', Arial, sans-serif;
		font-weight: 700;
	}

	.tab > :not(.tab-shape) {
		position: relative;
	}

	.tab span {
		width: 138px;
	}

	.tab-shape {
		position: absolute;
		top: 0;
		left: 0;
	}

	main {
		display: flex;
		flex: 1;
		min-height: 0;
		padding: 7px 3px 0 0;
		background: linear-gradient(#b5d7ea, #a9cbdd 7px);
	}

	.modes {
		display: flex;
		flex-direction: column;
		gap: 19px;
		width: 38px;
		background: #e2ebf0;
	}

	.vbar {
		position: relative;
		display: flex;
		flex-direction: column;
		padding: 11px 2px 2px;
		background: linear-gradient(90deg, #e6f3fa, #d5e9f4 50%, #bbdcee 75%, #a9cbdd);
	}

	.vbar::before {
		content: '';
		position: absolute;
		top: 4px;
		left: 1px;
		right: 0;
		height: 2px;
		background: repeating-linear-gradient(90deg, #fff 0 2px, #9cb4c2 2px 3px, transparent 3px 5px);
	}

	.vbar .sep {
		width: 32px;
		height: 2px;
		margin: 1px 2px;
		border: 0;
		border-top: 1px solid #999;
	}

	.orient {
		padding-top: 13px;
	}

	.orient input {
		box-sizing: border-box;
		width: 34px;
		height: 18px;
		margin-bottom: 4px;
		padding: 0;
		border: 0;
		border-top: 1px solid #222;
		border-left: 1px solid #222;
		background: #fff;
		font-family: Roboto, sans-serif;
		font-size: 14px;
	}

	.side {
		display: flex;
		flex-direction: column;
		gap: 4px;
		width: 121px;
		font-family: 'Liberation Sans', Arial, sans-serif;
		font-size: 13px;
	}

	.overview {
		border: 1px solid #666;
		background: #dfdfcf;
	}

	.objects {
		display: flex;
		flex: 1;
		flex-direction: column;
		border: 1px solid #666;
	}

	.objects-head {
		display: flex;
		align-items: center;
		gap: 15px;
		height: 23px;
		padding-left: 3px;
		background: linear-gradient(#e9f3f9, #bfdded);
	}

	.objects-head button {
		width: 15px;
		height: 15px;
		border-radius: 3px;
		background: #0b46d8;
		color: #fff;
		font-weight: 700;
	}

	ul {
		flex: 1;
		margin: 0;
		padding: 0;
		border: 1px solid #0078d7;
		background: #fff;
		list-style: none;
	}

	li button {
		justify-content: flex-start;
		width: 100%;
		height: 16px;
		padding: 0 0 1px 2px;
	}

	li .selected {
		background: #0078d7;
		color: #fff;
	}

	.canvas {
		flex: 1;
		min-width: 0;
		margin-left: 4px;
		border: 1px solid #666;
		background: #dfdfcf;
		overflow: hidden;
	}

	.canvas text {
		font-family: 'Liberation Sans', Arial, sans-serif;
	}

	.wire {
		fill: none;
		stroke: #004000;
		stroke-width: 2;
	}

	.part {
		fill: none;
		stroke: #800000;
		stroke-width: 2;
	}

	.ref {
		font-size: 18px;
	}

	.val {
		font-size: 12px;
	}

	.red {
		fill: #900000;
	}

	.rpm {
		font-size: 14px;
		fill: #007a1c;
	}

	.unit {
		font-size: 12px;
		font-style: italic;
		fill: #900000;
	}

	.status {
		display: flex;
		gap: 4px;
		height: 36px;
		background: #e2ebf0;
		font-family: Roboto, 'Liberation Sans', sans-serif;
		font-size: 14px;
	}

	.status .bar {
		padding-top: 2px;
		padding-bottom: 0;
	}

	.status .sim {
		padding-left: 11px;
	}

	.sim .tool {
		width: 44px;
	}

	.messages {
		gap: 6px;
		padding: 0 1px 0 7px;
	}

	.status .sheet {
		width: 412px;
		padding-left: 13px;
	}

	.status .coords {
		flex: 1;
		padding-left: 14px;
	}

	.num {
		width: 62px;
		margin-right: 6px;
		text-align: right;
	}

	.wide {
		margin: 0;
	}

	.units {
		margin-left: auto;
		color: #20109c;
	}

	.taskbar {
		display: flex;
		height: 50px;
		background: linear-gradient(90deg, #263335, #3a3f3f 35%, #2c2c2d 44%, #35291f 51%, #2d2d2b 60%, #30302d 70%, #251d1d 80%, #261e1d 88%, #2e2e2b);
		color: #fff;
		font-size: 14px;
	}

	.start {
		width: 60px;
	}

	.search {
		display: flex;
		align-items: center;
		gap: 13px;
		box-sizing: border-box;
		width: 430px;
		padding-left: 14px;
		border: 1px solid #bbb;
		background: #f2f2f2;
	}

	.search input {
		flex: 1;
		min-width: 0;
		padding: 0;
		border: 0;
		background: none;
		color: #333;
		font: inherit;
		font-size: 18px;
	}

	.search input::placeholder {
		color: #444;
		opacity: 1;
	}

	.task {
		position: relative;
		width: 62px;
	}

	.task.open::after {
		content: '';
		position: absolute;
		right: 5px;
		bottom: 0;
		left: 5px;
		height: 3px;
		background: #76b9ed;
	}

	.task.active {
		background: #595959;
	}

	.task.active::after {
		right: 0;
		left: 0;
	}

	.tray {
		display: flex;
		align-items: center;
		gap: 10px;
		margin-left: auto;
		padding-right: 29px;
	}

	.weather {
		gap: 10px;
		margin-right: 12px;
		font-family: 'DejaVu Sans', sans-serif;
		font-size: 17px;
	}

	.chevron {
		margin-right: 8px;
	}

	.lang {
		margin-left: 3px;
	}

	.clock {
		flex-direction: column;
		gap: 2px;
		width: 60px;
		margin-left: 10px;
		line-height: 20px;
	}

	.notify {
		position: relative;
		margin-left: 18px;
	}

	.badge {
		position: absolute;
		top: 8px;
		left: 9px;
		width: 18px;
		height: 18px;
		border: 1px solid #888;
		border-radius: 50%;
		background: #2b2b2a;
		line-height: 18px;
		text-align: center;
	}

	.watermark {
		position: absolute;
		bottom: 16px;
		left: 0;
		right: 0;
		display: flex;
		flex-direction: column;
		align-items: center;
		color: #b4b4b4;
		opacity: 0.5;
		font-weight: 700;
		pointer-events: none;
	}

	.ar {
		font-family: 'DejaVu Sans', sans-serif;
		font-size: 66px;
		line-height: 66px;
	}

	.en {
		font-family: 'Liberation Sans', Arial, sans-serif;
		font-size: 37px;
		line-height: 44px;
	}
</style>
